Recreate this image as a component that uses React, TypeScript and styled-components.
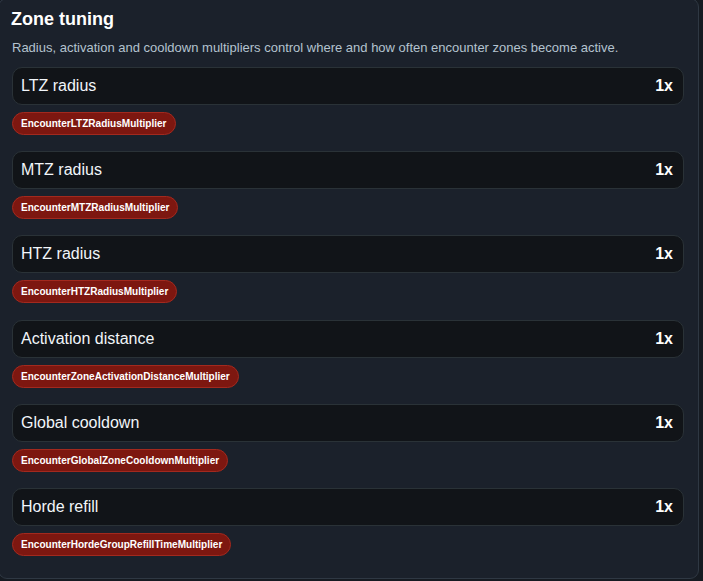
import React from "react";
import styled, { createGlobalStyle } from "styled-components";

const Global = createGlobalStyle`
  html, body {
    margin: 0;
    padding: 0;
    background: #161b22;
    font-family: "Liberation Sans", Arial, sans-serif;
  }
`;

const Panel = styled.section`
  box-sizing: border-box;
  width: 701px;
  margin: -2px 0 0 -2px;
  padding: 0 14px 22px 13px;
  background: #1b212b;
  border: 1px solid #2f3843;
  border-radius: 9px;
`;

const Title = styled.h2`
  margin: 0 0 0 -1px;
  padding-top: 9px;
  font-size: 18px;
  line-height: 22px;
  font-weight: 700;
  color: #ffffff;
`;

const Description = styled.p`
  margin: 9px 0 0;
  font-size: 13px;
  line-height: 17px;
  color: #b4c3cf;
`;

const List = styled.div`
  display: flex;
  flex-direction: column;
  gap: 16.2px;
  margin-top: 11px;
`;

const Item = styled.div`
  display: flex;
  flex-direction: column;
  align-items: flex-start;
  gap: 7px;
`;

const Row = styled.div`
  box-sizing: border-box;
  width: 100%;
  height: 38px;
  display: flex;
  align-items: center;
  justify-content: space-between;
  padding: 0 10px 0 8px;
  background: #111418;
  border: 1px solid #2a3237;
  border-radius: 10px;
`;

const Label = styled.span`
  font-size: 16px;
  color: #f2f6fa;
`;

const Value = styled.span`
  font-size: 16px;
  font-weight: 700;
  color: #ffffff;
`;

const Badge = styled.span`
  box-sizing: border-box;
  height: 23px;
  display: inline-flex;
  align-items: center;
  padding: 0 8px;
  background: #7d1710;
  border: 1px solid #a3291e;
  border-radius: 12px;
  font-size: 10.05px;
  font-weight: 700;
  color: #ffffff;
`;

const settings = [
  { label: "LTZ radius", key: "EncounterLTZRadiusMultiplier" },
  { label: "MTZ radius", key: "EncounterMTZRadiusMultiplier" },
  { label: "HTZ radius", key: "EncounterHTZRadiusMultiplier" },
  { label: "Activation distance", key: "EncounterZoneActivationDistanceMultiplier" },
  { label: "Global cooldown", key: "EncounterGlobalZoneCooldownMultiplier" },
  { label: "Horde refill", key: "EncounterHordeGroupRefillTimeMultiplier" },
];

export default function App() {
  return (
    <>
      <Global />
      <Panel>
        <Title>Zone tuning</Title>
        <Description>
          Radius, activation and cooldown multipliers control where and how often encounter zones become active.
        </Description>
        <List>
          {settings.map((s) => (
            <Item key={s.key}>
              <Row>
                <Label>{s.label}</Label>
                <Value>1x</Value>
              </Row>
              <Badge>{s.key}</Badge>
            </Item>
          ))}
        </List>
      </Panel>
    </>
  );
}
